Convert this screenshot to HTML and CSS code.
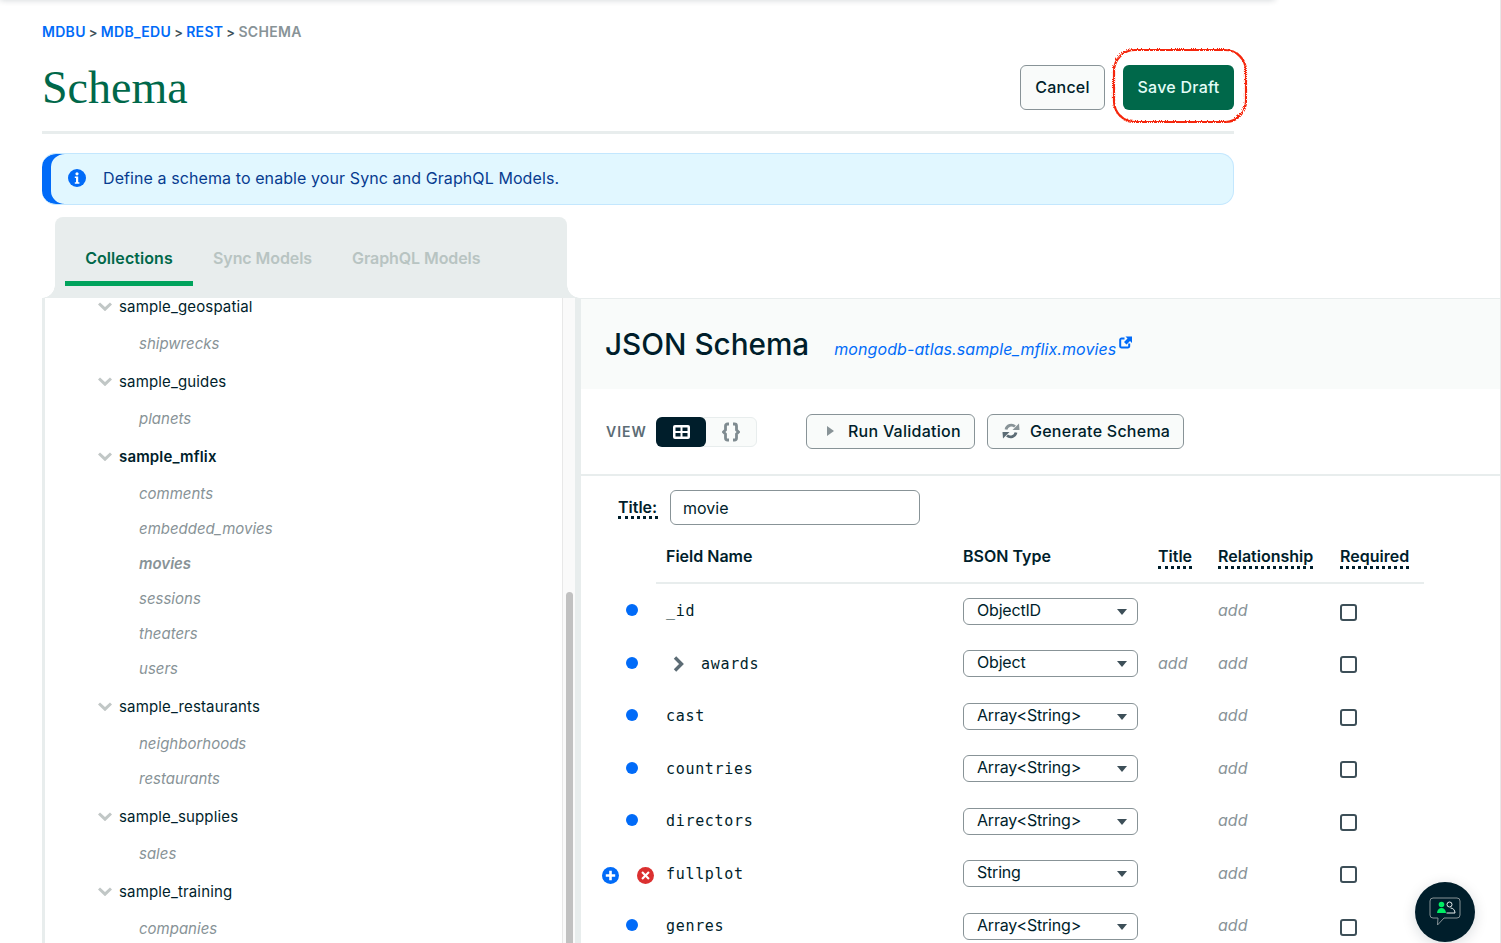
FILE: index.html
```html
<!DOCTYPE html>
<html lang="en">
<head>
  <meta charset="UTF-8">
  <title>Schema</title>
  <link rel="stylesheet" href="styles.css">
</head>
<body>
<div class="page">
  <div class="top">
    <nav class="crumbs">
      <a>MDBU</a><span class="sep">&gt;</span><a>MDB_EDU</a><span class="sep">&gt;</span><a>REST</a><span class="sep">&gt;</span><span class="here">SCHEMA</span>
    </nav>
    <header class="head">
      <h1>Schema</h1>
      <div class="actions">
        <button class="btn-cancel">Cancel</button>
        <button class="btn-save">Save Draft</button>
      </div>
    </header>
    <div class="banner">
      <svg class="banner-icon" width="18" height="18" viewBox="0 0 18 18"><circle cx="9" cy="9" r="9" fill="#016bf8"/><circle cx="9" cy="4.8" r="1.6" fill="#fff"/><path d="M6.8 7.6h3.4v5.6h1.2v1.5H6.8v-1.5H8V9.1H6.8z" fill="#fff"/></svg>
      <span>Define a schema to enable your Sync and GraphQL Models.</span>
    </div>
    <div class="tabs">
      <div class="tab active">Collections</div>
      <div class="tab">Sync Models</div>
      <div class="tab">GraphQL Models</div>
    </div>
  </div>

  <div class="work">
    <aside class="tree">
      <div class="tree-list">
        <div class="db first"><svg class="chev" width="14" height="9" viewBox="0 0 14 9"><path d="M1 1.500 7 7.200l6-5.700" fill="none" stroke="#c1c7c6" stroke-width="3"/></svg>sample_geospatial</div>
        <div class="coll">shipwrecks</div>
        <div class="db"><svg class="chev" width="14" height="9" viewBox="0 0 14 9"><path d="M1 1.500 7 7.200l6-5.700" fill="none" stroke="#c1c7c6" stroke-width="3"/></svg>sample_guides</div>
        <div class="coll">planets</div>
        <div class="db open"><svg class="chev" width="14" height="9" viewBox="0 0 14 9"><path d="M1 1.500 7 7.200l6-5.700" fill="none" stroke="#c1c7c6" stroke-width="3"/></svg>sample_mflix</div>
        <div class="coll">comments</div>
        <div class="coll">embedded_movies</div>
        <div class="coll current">movies</div>
        <div class="coll">sessions</div>
        <div class="coll">theaters</div>
        <div class="coll">users</div>
        <div class="db"><svg class="chev" width="14" height="9" viewBox="0 0 14 9"><path d="M1 1.500 7 7.200l6-5.700" fill="none" stroke="#c1c7c6" stroke-width="3"/></svg>sample_restaurants</div>
        <div class="coll">neighborhoods</div>
        <div class="coll">restaurants</div>
        <div class="db"><svg class="chev" width="14" height="9" viewBox="0 0 14 9"><path d="M1 1.500 7 7.200l6-5.700" fill="none" stroke="#c1c7c6" stroke-width="3"/></svg>sample_supplies</div>
        <div class="coll">sales</div>
        <div class="db"><svg class="chev" width="14" height="9" viewBox="0 0 14 9"><path d="M1 1.500 7 7.200l6-5.700" fill="none" stroke="#c1c7c6" stroke-width="3"/></svg>sample_training</div>
        <div class="coll">companies</div>
      </div>
      <div class="scroll"><div class="thumb"></div></div>
    </aside>

    <main class="panel">
      <div class="panel-head">
        <h2>JSON Schema</h2>
        <a class="ns">mongodb-atlas.sample_mflix.movies</a>
        <svg class="ext" width="13" height="13" viewBox="0 0 13 13"><path d="M5.500 2.500H2.500a1.300 1.300 0 0 0-1.300 1.300v6.400a1.300 1.300 0 0 0 1.300 1.300h6.400a1.300 1.300 0 0 0 1.300-1.300V7.500" fill="none" stroke="#016bf8" stroke-width="2"/><path d="M6.500 .5H13V7l-2-2-3.500 3.500L5 6l3.500-3.500z" fill="#016bf8"/></svg>
      </div>

      <div class="toolbar">
        <span class="view-label">VIEW</span>
        <div class="toggle">
          <span class="toggle-on">
            <svg width="17" height="14" viewBox="0 0 17 14"><rect width="17" height="14" rx="2" fill="#fff"/><path d="M2.500 2.500h5v3.500h-5zM9.500 2.500h5v3.500h-5zM2.500 8h5v3.500h-5zM9.500 8h5v3.500h-5z" fill="#001e2b"/></svg>
          </span>
          <span class="toggle-off">
            <svg width="18" height="20" viewBox="0 0 18 20"><path d="M7 2H5.500A2 2 0 0 0 3.500 4v4L1.500 10l2 2v4a2 2 0 0 0 2 2H7M11 2h1.500a2 2 0 0 1 2 2v4l2 2-2 2v4a2 2 0 0 1-2 2H11" fill="none" stroke="#7f8b90" stroke-width="2.800"/></svg>
          </span>
        </div>
        <button class="tool tool-run">
          <svg width="7" height="10" viewBox="0 0 7 10"><path d="M0 0l7 5-7 5z" fill="#889397"/></svg>
          Run Validation
        </button>
        <button class="tool tool-gen">
          <svg width="18" height="16" viewBox="0 0 18 16"><path d="M4 6.500a5.500 5.500 0 0 1 9-3" fill="none" stroke="#889397" stroke-width="2.800"/><path d="M10.500 7H17.500L17 .5z" fill="#889397"/><path d="M14 9.500a5.500 5.500 0 0 1-9 3" fill="none" stroke="#5c6c75" stroke-width="2.800"/><path d="M7.500 9H.5L1 15.500z" fill="#5c6c75"/></svg>
          Generate Schema
        </button>
      </div>

      <div class="title-row">
        <span class="tip title-label">Title:</span>
        <div class="title-input">movie</div>
      </div>

      <div class="field-head">
        <span></span>
        <span>Field Name</span>
        <span>BSON Type</span>
        <span><span class="tip">Title</span></span>
        <span><span class="tip">Relationship</span></span>
        <span><span class="tip">Required</span></span>
      </div>

      <div class="field-row">
        <div class="mark"><span class="dot"></span></div>
        <div class="name">_id</div>
        <div class="select">ObjectID</div>
        <div></div>
        <div class="add">add</div>
        <div class="check"></div>
      </div>
      <div class="field-row">
        <div class="mark"><span class="dot"></span></div>
        <div class="name">
          <svg class="expand" width="11" height="16" viewBox="0 0 11 16"><path d="M2 1.500 8.500 8 2 14.500" fill="none" stroke="#5c6c75" stroke-width="3.400"/></svg>
          awards
        </div>
        <div class="select">Object</div>
        <div class="add">add</div>
        <div class="add">add</div>
        <div class="check"></div>
      </div>
      <div class="field-row">
        <div class="mark"><span class="dot"></span></div>
        <div class="name">cast</div>
        <div class="select">Array&lt;String&gt;</div>
        <div></div>
        <div class="add">add</div>
        <div class="check"></div>
      </div>
      <div class="field-row">
        <div class="mark"><span class="dot"></span></div>
        <div class="name">countries</div>
        <div class="select">Array&lt;String&gt;</div>
        <div></div>
        <div class="add">add</div>
        <div class="check"></div>
      </div>
      <div class="field-row">
        <div class="mark"><span class="dot"></span></div>
        <div class="name">directors</div>
        <div class="select">Array&lt;String&gt;</div>
        <div></div>
        <div class="add">add</div>
        <div class="check"></div>
      </div>
      <div class="field-row">
        <div class="mark mark-edit">
          <svg width="17" height="17" viewBox="0 0 17 17"><circle cx="8.500" cy="8.500" r="8.500" fill="#016bf8"/><path d="M7.200 3.800h2.600v3.400h3.400v2.600H9.800v3.400H7.200V9.800H3.800V7.200h3.400z" fill="#fff"/></svg>
          <svg width="17" height="17" viewBox="0 0 17 17"><circle cx="8.500" cy="8.500" r="8.500" fill="#db3030"/><path d="M5.800 4.300 8.500 7l2.700-2.700 1.500 1.500L10 8.500l2.700 2.700-1.500 1.500L8.500 10l-2.700 2.700-1.500-1.500L7 8.500 4.300 5.800z" fill="#fff"/></svg>
        </div>
        <div class="name">fullplot</div>
        <div class="select">String</div>
        <div></div>
        <div class="add">add</div>
        <div class="check"></div>
      </div>
      <div class="field-row">
        <div class="mark"><span class="dot"></span></div>
        <div class="name">genres</div>
        <div class="select">Array&lt;String&gt;</div>
        <div></div>
        <div class="add">add</div>
        <div class="check"></div>
      </div>
    </main>
  </div>

  <!-- red marker drawn over the screenshot -->
  <svg class="marker" width="140" height="80" viewBox="0 0 140 80">
    <defs><filter id="rough"><feTurbulence baseFrequency="0.5" numOctaves="2" seed="3"/><feDisplacementMap in="SourceGraphic" scale="2"/></filter></defs>
    <rect x="4" y="4" width="132" height="72" rx="21" fill="none" stroke="#f5260a" stroke-width="2.200" filter="url(#rough)"/>
  </svg>

  <div class="chat">
    <svg width="32" height="30" viewBox="0 0 32 30"><path d="M4 1h24a3 3 0 0 1 3 3v14a3 3 0 0 1-3 3H15l-6.500 7 .5-7H4a3 3 0 0 1-3-3V4a3 3 0 0 1 3-3z" fill="none" stroke="#889397" stroke-width="1"/><circle cx="12.500" cy="7.500" r="2.800" fill="#00ed64"/><path d="M8 16c0-3 2-5 4.500-5s4.500 2 4.500 5z" fill="#00ed64"/><circle cx="20.500" cy="7.500" r="2.500" fill="none" stroke="#e8eded"/><path d="M17.500 16H26c0-3-2-5-4.500-5" fill="none" stroke="#e8eded"/></svg>
  </div>
</div>
</body>
</html>
```

FILE: styles.css
```css
* {
  box-sizing: border-box;
}
body {
  margin: 0;
  font-family: "Inter", "Liberation Sans", sans-serif;
  font-size: 16px;
  color: #001e2b;
  background: #fff;
}
.page {
  position: relative;
  width: 1501px;
  height: 943px;
  overflow: hidden;
  border-right: 1px solid #e8e8e8;
}
.page::before {
  content: "";
  position: absolute;
  left: 0;
  top: -6px;
  width: 1275px;
  height: 6px;
  box-shadow: 0 0 6px rgba(0, 30, 43, 0.2);
}
.top {
  padding: 22px 266px 0 42px;
}
.crumbs {
  height: 20px;
  font-size: 14px;
  line-height: 20px;
  font-weight: 600;
  letter-spacing: 0.300px;
  color: #016bf8;
}
.crumbs .sep {
  margin: 0 3px;
  color: #3d4f58;
  font-size: 13px;
}
.crumbs .here {
  color: #889397;
}
.head {
  display: flex;
  justify-content: space-between;
  align-items: center;
  margin-top: 23px;
  padding-bottom: 21px;
  border-bottom: 3px solid #e8eded;
}
h1 {
  margin: 0;
  font-family: "Liberation Serif", serif;
  font-size: 46px;
  line-height: 45px;
  font-weight: 400;
  color: #00684a;
}
.actions {
  display: flex;
  gap: 18px;
}
button {
  font-family: inherit;
  font-size: 16px;
  font-weight: 500;
  letter-spacing: 0.250px;
}
.btn-cancel {
  width: 85px;
  height: 45px;
  padding: 0 0 2px;
  background: #f9fbfa;
  border: 1px solid #889397;
  border-radius: 6px;
  color: #001e2b;
}
.btn-save {
  width: 111px;
  height: 45px;
  padding: 0 0 2px;
  background: #00684a;
  border: 0;
  border-radius: 6px;
  color: #e3fcf7;
}
.banner {
  display: flex;
  align-items: center;
  gap: 17px;
  height: 52px;
  margin-top: 19px;
  padding: 0 0 2px 26px;
  background: #e1f7ff;
  border: 1px solid #c3e7fe;
  border-left: 0;
  border-radius: 14px;
  box-shadow: inset 9px 0 0 #016bf8;
  color: #083c90;
  letter-spacing: 0.090px;
}
.tabs {
  position: relative;
  display: flex;
  width: 512px;
  height: 81px;
  margin: 12px 0 0 13px;
  padding: 24px 0 0 10px;
  background: #e8eded;
  border-radius: 8px 8px 0 0;
  font-weight: 600;
  color: #b8c4c2;
}
.tabs::before,
.tabs::after {
  content: "";
  position: absolute;
  bottom: 0;
  width: 13px;
  height: 13px;
}
.tabs::before {
  left: -13px;
  background: radial-gradient(circle at 0 0, transparent 12.500px, #e8eded 13px);
}
.tabs::after {
  right: -13px;
  background: radial-gradient(circle at 100% 0, transparent 12.500px, #e8eded 13px);
}
.tab {
  height: 45px;
  padding: 7px 20px 0;
  line-height: 20px;
  letter-spacing: -0.080px;
}
.tab.active {
  width: 128px;
  text-align: center;
  letter-spacing: 0.080px;
  color: #00684a;
  border-bottom: 5px solid #00a35c;
  border-radius: 4px 4px 0 0;
}
.work {
  display: flex;
  height: 645px;
  margin-left: 42px;
}
.tree {
  display: flex;
  width: 539px;
  border-left: 3px solid #e8eded;
  border-right: 6px solid #e8eded;
  overflow: hidden;
}
.tree-list {
  flex: 1;
  font-size: 15px;
}
.db {
  display: flex;
  align-items: center;
  height: 35px;
  margin-top: 3px;
  margin-bottom: 2px;
  padding-left: 53px;
  letter-spacing: 0.150px;
}
.db.first {
  height: 16px;
  margin-top: 0;
  margin-bottom: 11.500px;
}
.db.open {
  font-weight: 600;
}
.chev {
  margin-right: 7px;
}
.coll {
  height: 35px;
  padding-left: 94px;
  font-size: 15px;
  line-height: 35px;
  font-style: italic;
  color: #889397;
}
.coll.current {
  font-weight: 600;
}
.scroll {
  width: 13px;
  padding: 294px 2px 0 3px;
  background: #fafafa;
  border-left: 1px solid #e8e8e8;
}
.thumb {
  height: 400px;
  background: #c1c1c1;
  border-radius: 4px;
}
.panel {
  flex: 1;
  border-top: 1px solid #e8eded;
}
.panel-head {
  display: flex;
  align-items: center;
  height: 90px;
  padding-left: 24px;
  background: #f9fbfa;
}
h2 {
  margin: 0 25px 0 0;
  font-size: 29.700px;
  font-weight: 500;
}
.ns {
  margin-top: 10px;
  font-style: italic;
  letter-spacing: 0.090px;
  color: #016bf8;
}
.ext {
  margin: -3px 0 0 3px;
}
.toolbar {
  display: flex;
  align-items: center;
  height: 87px;
  padding-left: 25px;
  border-bottom: 2px solid #e8eded;
}
.view-label {
  width: 50px;
  font-size: 14px;
  font-weight: 600;
  letter-spacing: 1px;
  color: #5c6c75;
}
.toggle {
  display: flex;
  width: 101px;
  height: 30px;
  background: #f9fbfa;
  border: 1px solid #e8eded;
  border-radius: 6px;
}
.toggle-on {
  display: flex;
  align-items: center;
  justify-content: center;
  width: 50px;
  margin: -1px 0 -1px -1px;
  background: #001e2b;
  border-radius: 6px;
}
.toggle-off {
  display: flex;
  align-items: center;
  justify-content: center;
  flex: 1;
}
.tool {
  display: flex;
  align-items: center;
  height: 35px;
  padding-bottom: 2px;
  background: #f9fbfa;
  border: 1px solid #889397;
  border-radius: 6px;
  color: #001e2b;
}
.tool-run {
  width: 169px;
  margin-left: 49px;
  padding-left: 20px;
  gap: 14px;
}
.tool-gen {
  width: 197px;
  margin-left: 12px;
  padding-left: 14px;
  gap: 10px;
}
.title-row {
  display: flex;
  align-items: center;
  gap: 12px;
  margin-top: 14px;
  padding-left: 37px;
}
.tip {
  font-weight: 600;
  border-bottom: 3px dotted #001e2b;
  line-height: 17px;
}
.title-label {
  width: 40px;
  margin-top: 2px;
}
.title-input {
  width: 250px;
  height: 35px;
  padding-left: 12px;
  line-height: 35px;
  border: 1px solid #889397;
  border-radius: 6px;
}
.field-head {
  display: grid;
  grid-template-columns: 10px 297px 195px 60px 122px 84px;
  align-items: center;
  width: 768px;
  height: 59px;
  margin-left: 75px;
  padding-top: 4px;
  border-bottom: 2px solid #e8eded;
  font-weight: 600;
}
.field-row {
  display: grid;
  grid-template-columns: 85px 297px 195px 60px 122px 84px;
  align-items: center;
  height: 52.500px;
}
.mark {
  display: flex;
  align-items: center;
  padding-left: 45px;
}
.mark-edit {
  gap: 18px;
  margin-top: 5px;
  padding-left: 21px;
}
.dot {
  width: 12px;
  height: 12px;
  background: #016bf8;
  border-radius: 50%;
}
.name {
  display: flex;
  align-items: center;
  padding-top: 2px;
  font-family: "DejaVu Sans Mono", "Liberation Mono", monospace;
  font-size: 15px;
  letter-spacing: 0.680px;
}
.expand {
  margin: 0 17px 0 7px;
}
.select {
  position: relative;
  width: 175px;
  height: 27px;
  margin-top: 2px;
  padding-left: 13px;
  line-height: 23px;
  letter-spacing: -0.200px;
  border: 1px solid #889397;
  border-radius: 6px;
}
.select::after {
  content: "";
  position: absolute;
  right: 10px;
  top: 10px;
  border: 5px solid transparent;
  border-top: 6px solid #3d4f58;
  border-bottom: 0;
}
.add {
  font-style: italic;
  color: #889397;
}
.check {
  width: 17px;
  height: 17px;
  margin-top: 4px;
  border: 2px solid #3d4f58;
  border-radius: 3px;
}
.marker {
  position: absolute;
  left: 1109px;
  top: 45px;
}
.chat {
  position: absolute;
  left: 1415px;
  top: 882px;
  display: flex;
  align-items: center;
  justify-content: center;
  width: 60px;
  height: 60px;
  background: #001e2b;
  border-radius: 50%;
  box-shadow: 0 3px 14px rgba(0, 30, 43, 0.15);
}
```
